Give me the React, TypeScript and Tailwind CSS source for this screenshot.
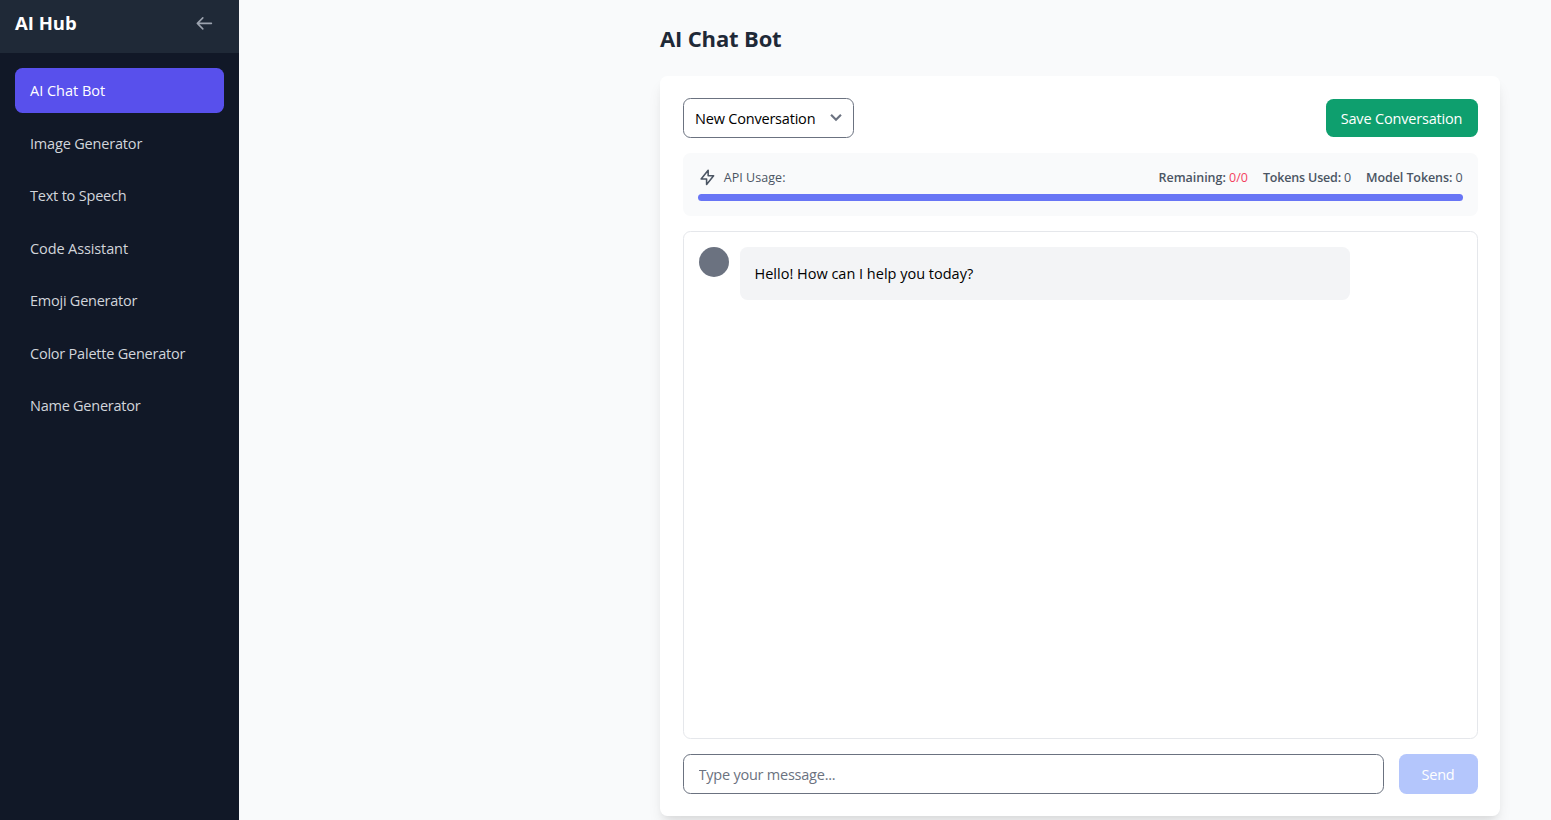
import { useState } from "react";

const tools = [
  { name: "AI Chat Bot", tracking: "tracking-[0px]" },
  { name: "Image Generator", tracking: "tracking-[-0.18px]" },
  { name: "Text to Speech", tracking: "tracking-[-0.2px]" },
  { name: "Code Assistant", tracking: "tracking-[-0.11px]" },
  { name: "Emoji Generator", tracking: "tracking-[-0.24px]" },
  { name: "Color Palette Generator", tracking: "tracking-[-0.22px]" },
  { name: "Name Generator", tracking: "tracking-[-0.25px]" },
];

function Sidebar() {
  const [active, setActive] = useState("AI Chat Bot");
  return (
    <aside className="flex w-[239px] shrink-0 flex-col bg-[#111827]">
      <div className="flex h-[53px] items-center justify-between bg-[#1f2937] pr-[25px] pb-[6px] pl-[15px]">
        <h2 className="pb-[2px] text-[18.5px] font-bold tracking-[0px] text-white">AI Hub</h2>
        <button type="button" aria-label="Collapse sidebar" className="text-[#9ca3af]">
          <svg className="block size-[18.75px]" viewBox="0 0 24 24" fill="none" stroke="currentColor" strokeWidth="2" strokeLinecap="round" strokeLinejoin="round">
            <path d="M10 19l-7-7m0 0l7-7m-7 7h18" />
          </svg>
        </button>
      </div>
      <nav className="flex flex-col gap-[7.5px] p-[15px]">
        {tools.map((tool) => (
          <button
            key={tool.name}
            type="button"
            onClick={() => setActive(tool.name)}
            className={`h-[45px] rounded-[7.5px] px-[15px] pt-[1px] text-left text-[14.5px] ${tool.tracking} ${
              active === tool.name ? "bg-[#5850ec] text-white" : "text-[#d1d5db]"
            }`}
          >
            {tool.name}
          </button>
        ))}
      </nav>
    </aside>
  );
}

function Stat({ label, value, valueClass = "" }: { label: string; value: string; valueClass?: string }) {
  return (
    <span>
      <span className="font-semibold">{label}</span> <span className={valueClass}>{value}</span>
    </span>
  );
}

function ApiUsage() {
  return (
    <section className="mt-[15px] h-[62.5px] rounded-[7.5px] bg-[#f9fafb] px-[15px] pt-[15px] text-[12.5px] text-[#4b5563]">
      <div className="flex h-[18.75px] items-center justify-between">
        <div className="flex items-center tracking-[0.05px]">
          <svg className="mr-[7.5px] block size-[18.75px]" viewBox="0 0 24 24" fill="none" stroke="currentColor" strokeWidth="2" strokeLinecap="round" strokeLinejoin="round">
            <path d="M13 10V3L4 14h7v7l9-11h-7z" />
          </svg>
          <span className="pt-[2px]">API Usage:</span>
        </div>
        <div className="flex gap-[15px] pt-[2px]">
          <span className="tracking-[-0.02px]">
            <Stat label="Remaining:" value="0/0" valueClass="text-[#f43f5e]" />
          </span>
          <span className="tracking-[-0.17px]">
            <Stat label="Tokens Used:" value="0" />
          </span>
          <span className="tracking-[-0.09px]">
            <Stat label="Model Tokens:" value="0" />
          </span>
        </div>
      </div>
      <div className="mt-[7px] h-[7px] rounded-full bg-[#6875f5]" />
    </section>
  );
}

function ChatPanel() {
  const [draft, setDraft] = useState("");
  return (
    <div className="flex h-[740px] flex-col rounded-[7.5px] bg-white px-[22.5px] pt-[22px] pb-[22.5px] shadow-[0_10px_15px_-3px_rgba(0,0,0,0.1),0_4px_6px_-2px_rgba(0,0,0,0.05)]">
      <div className="flex h-[40px] shrink-0 items-center justify-between">
        <button
          type="button"
          className="flex h-[40px] w-[171px] items-center justify-between rounded-[7.5px] border border-[#6b7280] bg-white pr-[7.25px] pl-[11.5px] text-[14.5px] tracking-[-0.2px] text-black"
        >
          <span className="pt-[2px]">New Conversation</span>
          <svg className="mb-[2px] block size-[18px]" viewBox="0 0 20 20" fill="none" stroke="#6b7280" strokeWidth="2.4" strokeLinecap="butt">
            <path d="M4.5 7.5l5.5 5.5 5.5-5.5" />
          </svg>
        </button>
        <button type="button" className="h-[38px] w-[152px] rounded-[7.5px] bg-[#0e9f6e] pt-[2px] text-[14.5px] tracking-[-0.18px] text-white">
          Save Conversation
        </button>
      </div>

      <ApiUsage />

      <div className="mt-[15px] flex min-h-0 flex-1 items-start gap-[11px] rounded-[7.5px] border border-[#e5e7eb] p-[15px]">
        <div className="size-[30px] shrink-0 rounded-full bg-[#6b7280]" />
        <p className="flex h-[53px] w-[610px] items-center rounded-[7.5px] bg-[#f3f4f6] px-[15px] pt-[1px] text-[14.5px] tracking-[0px] text-black">
          Hello! How can I help you today?
        </p>
      </div>

      <form className="mt-[15px] flex shrink-0 gap-[15px]" onSubmit={(e) => e.preventDefault()}>
        <input
          value={draft}
          onChange={(e) => setDraft(e.target.value)}
          placeholder="Type your message..."
          className="h-[40px] min-w-0 flex-1 rounded-[7.5px] border border-[#6b7280] bg-white px-[15px] pt-[2px] text-[14.5px] tracking-[-0.23px] text-black placeholder:text-[#6b7280]"
        />
        <button type="submit" className="h-[40px] w-[79px] rounded-[7.5px] bg-[#b4c6fc] pt-[2px] text-[14.5px] tracking-[-0.2px] text-white">
          Send
        </button>
      </form>
    </div>
  );
}

export default function App() {
  return (
    <div className="flex h-[820px] overflow-hidden bg-[#f9fafb] font-['Open_Sans','Noto_Sans',sans-serif]">
      <Sidebar />
      <main className="flex flex-1 justify-end pr-[51px]">
        <div className="w-[840px]">
          <h1 className="flex h-[76px] items-center text-[22px] font-bold tracking-[-0.15px] text-[#1f2937]">AI Chat Bot</h1>
          <ChatPanel />
        </div>
      </main>
    </div>
  );
}
